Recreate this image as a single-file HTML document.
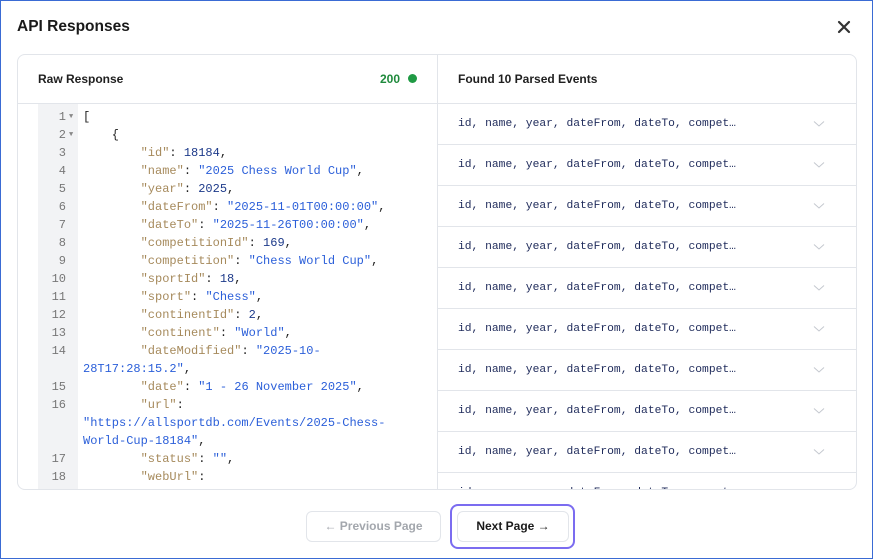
<!DOCTYPE html>
<html><head><style>
*{box-sizing:border-box;margin:0;padding:0}
body{width:873px;height:559px;background:#fff;font-family:"Liberation Sans",sans-serif;overflow:hidden}
.frame{position:absolute;left:0;top:0;width:873px;height:559px;border:1px solid #3a6bd4}
h1{position:absolute;left:17px;top:18px;font-size:15.5px;font-weight:bold;color:#1a1a1a}
.x{position:absolute;left:836px;top:19px}
.panel{position:absolute;left:17px;top:54px;width:840px;height:436px;border:1px solid #e2e5ea;border-radius:8px;overflow:hidden}
.hd{position:absolute;top:0;height:49px;border-bottom:1px solid #e2e5ea;font-size:12px;font-weight:bold;color:#1f1f1f;line-height:49px}
.div{position:absolute;left:419px;top:0;width:1px;height:436px;background:#e2e5ea}
.gut{position:absolute;left:20px;top:49px;width:40px;height:390px;background:#f2f3f5}
.code{position:absolute;left:0;top:53px;width:419px;font-family:"Liberation Mono",monospace;font-size:12px;line-height:18px}
.ln{display:block;position:relative;height:18px}
.n{position:absolute;left:20px;width:28px;text-align:right;color:#777}
.t{position:absolute;left:65px;color:#222;white-space:pre}
.k{color:#a68a5c}.s{color:#2b5fd9}.num{color:#1d3a8a}
.fold{position:absolute;left:51px;color:#888;font-size:7px}
.row{position:absolute;left:420px;width:420px;height:41px;border-bottom:1px solid #e2e5ea;font-family:"Liberation Mono",monospace;font-size:11.3px;color:#1e2a5a;line-height:41px;padding-left:20px}
.row svg{position:absolute;left:375px;top:16px}
.btn{position:absolute;top:511px;height:31px;border:1px solid #e2e5ea;border-radius:6px;font-size:12px;font-weight:bold;line-height:29px;text-align:center}
</style></head><body>
<div class="frame"></div>
<h1>API Responses</h1>
<svg class="x" width="16" height="16" viewBox="0 0 16 16"><path d="M3 3L13 13M13 3L3 13" stroke="#333" stroke-width="2.2" stroke-linecap="round"/></svg>
<div class="panel">
<div class="hd" style="left:0;width:419px;padding-left:20px">Raw Response<span style="position:absolute;left:362px;color:#1f8a3c">200</span><span style="position:absolute;left:390px;top:19px;width:9px;height:9px;border-radius:50%;background:#1f9a44"></span></div>
<div class="hd" style="left:420px;width:420px;padding-left:20px">Found 10 Parsed Events</div>
<div class="div"></div>
<div class="gut"></div>
<div class="code"><span class="ln"><span class="n">1</span><span class="fold">▼</span><span class="t">[</span></span><span class="ln"><span class="n">2</span><span class="fold">▼</span><span class="t">    {</span></span><span class="ln"><span class="n">3</span><span class="t">        <span class="k">"id"</span>: <span class="num">18184</span>,</span></span><span class="ln"><span class="n">4</span><span class="t">        <span class="k">"name"</span>: <span class="s">"2025 Chess World Cup"</span>,</span></span><span class="ln"><span class="n">5</span><span class="t">        <span class="k">"year"</span>: <span class="num">2025</span>,</span></span><span class="ln"><span class="n">6</span><span class="t">        <span class="k">"dateFrom"</span>: <span class="s">"2025-11-01T00:00:00"</span>,</span></span><span class="ln"><span class="n">7</span><span class="t">        <span class="k">"dateTo"</span>: <span class="s">"2025-11-26T00:00:00"</span>,</span></span><span class="ln"><span class="n">8</span><span class="t">        <span class="k">"competitionId"</span>: <span class="num">169</span>,</span></span><span class="ln"><span class="n">9</span><span class="t">        <span class="k">"competition"</span>: <span class="s">"Chess World Cup"</span>,</span></span><span class="ln"><span class="n">10</span><span class="t">        <span class="k">"sportId"</span>: <span class="num">18</span>,</span></span><span class="ln"><span class="n">11</span><span class="t">        <span class="k">"sport"</span>: <span class="s">"Chess"</span>,</span></span><span class="ln"><span class="n">12</span><span class="t">        <span class="k">"continentId"</span>: <span class="num">2</span>,</span></span><span class="ln"><span class="n">13</span><span class="t">        <span class="k">"continent"</span>: <span class="s">"World"</span>,</span></span><span class="ln"><span class="n">14</span><span class="t">        <span class="k">"dateModified"</span>: <span class="s">"2025-10-</span></span></span><span class="ln"><span class="t"><span class="s">28T17:28:15.2"</span>,</span></span><span class="ln"><span class="n">15</span><span class="t">        <span class="k">"date"</span>: <span class="s">"1 - 26 November 2025"</span>,</span></span><span class="ln"><span class="n">16</span><span class="t">        <span class="k">"url"</span>:</span></span><span class="ln"><span class="t"><span class="s">"https://allsportdb.com/Events/2025-Chess-</span></span></span><span class="ln"><span class="t"><span class="s">World-Cup-18184"</span>,</span></span><span class="ln"><span class="n">17</span><span class="t">        <span class="k">"status"</span>: <span class="s">""</span>,</span></span><span class="ln"><span class="n">18</span><span class="t">        <span class="k">"webUrl"</span>:</span></span></div>
<div class="row" style="top:49px">id, name, year, dateFrom, dateTo, compet…<svg width="12" height="8"><path d="M1 1.5L6 6L11 1.5" fill="none" stroke="#c4c8cf" stroke-width="1"/></svg></div>
<div class="row" style="top:90px">id, name, year, dateFrom, dateTo, compet…<svg width="12" height="8"><path d="M1 1.5L6 6L11 1.5" fill="none" stroke="#c4c8cf" stroke-width="1"/></svg></div>
<div class="row" style="top:131px">id, name, year, dateFrom, dateTo, compet…<svg width="12" height="8"><path d="M1 1.5L6 6L11 1.5" fill="none" stroke="#c4c8cf" stroke-width="1"/></svg></div>
<div class="row" style="top:172px">id, name, year, dateFrom, dateTo, compet…<svg width="12" height="8"><path d="M1 1.5L6 6L11 1.5" fill="none" stroke="#c4c8cf" stroke-width="1"/></svg></div>
<div class="row" style="top:213px">id, name, year, dateFrom, dateTo, compet…<svg width="12" height="8"><path d="M1 1.5L6 6L11 1.5" fill="none" stroke="#c4c8cf" stroke-width="1"/></svg></div>
<div class="row" style="top:254px">id, name, year, dateFrom, dateTo, compet…<svg width="12" height="8"><path d="M1 1.5L6 6L11 1.5" fill="none" stroke="#c4c8cf" stroke-width="1"/></svg></div>
<div class="row" style="top:295px">id, name, year, dateFrom, dateTo, compet…<svg width="12" height="8"><path d="M1 1.5L6 6L11 1.5" fill="none" stroke="#c4c8cf" stroke-width="1"/></svg></div>
<div class="row" style="top:336px">id, name, year, dateFrom, dateTo, compet…<svg width="12" height="8"><path d="M1 1.5L6 6L11 1.5" fill="none" stroke="#c4c8cf" stroke-width="1"/></svg></div>
<div class="row" style="top:377px">id, name, year, dateFrom, dateTo, compet…<svg width="12" height="8"><path d="M1 1.5L6 6L11 1.5" fill="none" stroke="#c4c8cf" stroke-width="1"/></svg></div>
<div class="row" style="top:418px;line-height:40px">id, name, year, dateFrom, dateTo, compet…</div>
</div>
<div class="btn" style="left:306px;width:135px;color:#a3a7ad">← Previous Page</div>
<div style="position:absolute;left:450px;top:504px;width:125px;height:45px;border:2px solid #7b6cf0;border-radius:8px"></div>
<div class="btn" style="left:457px;width:112px;color:#1a1a1a">Next Page →</div>
</body></html>
